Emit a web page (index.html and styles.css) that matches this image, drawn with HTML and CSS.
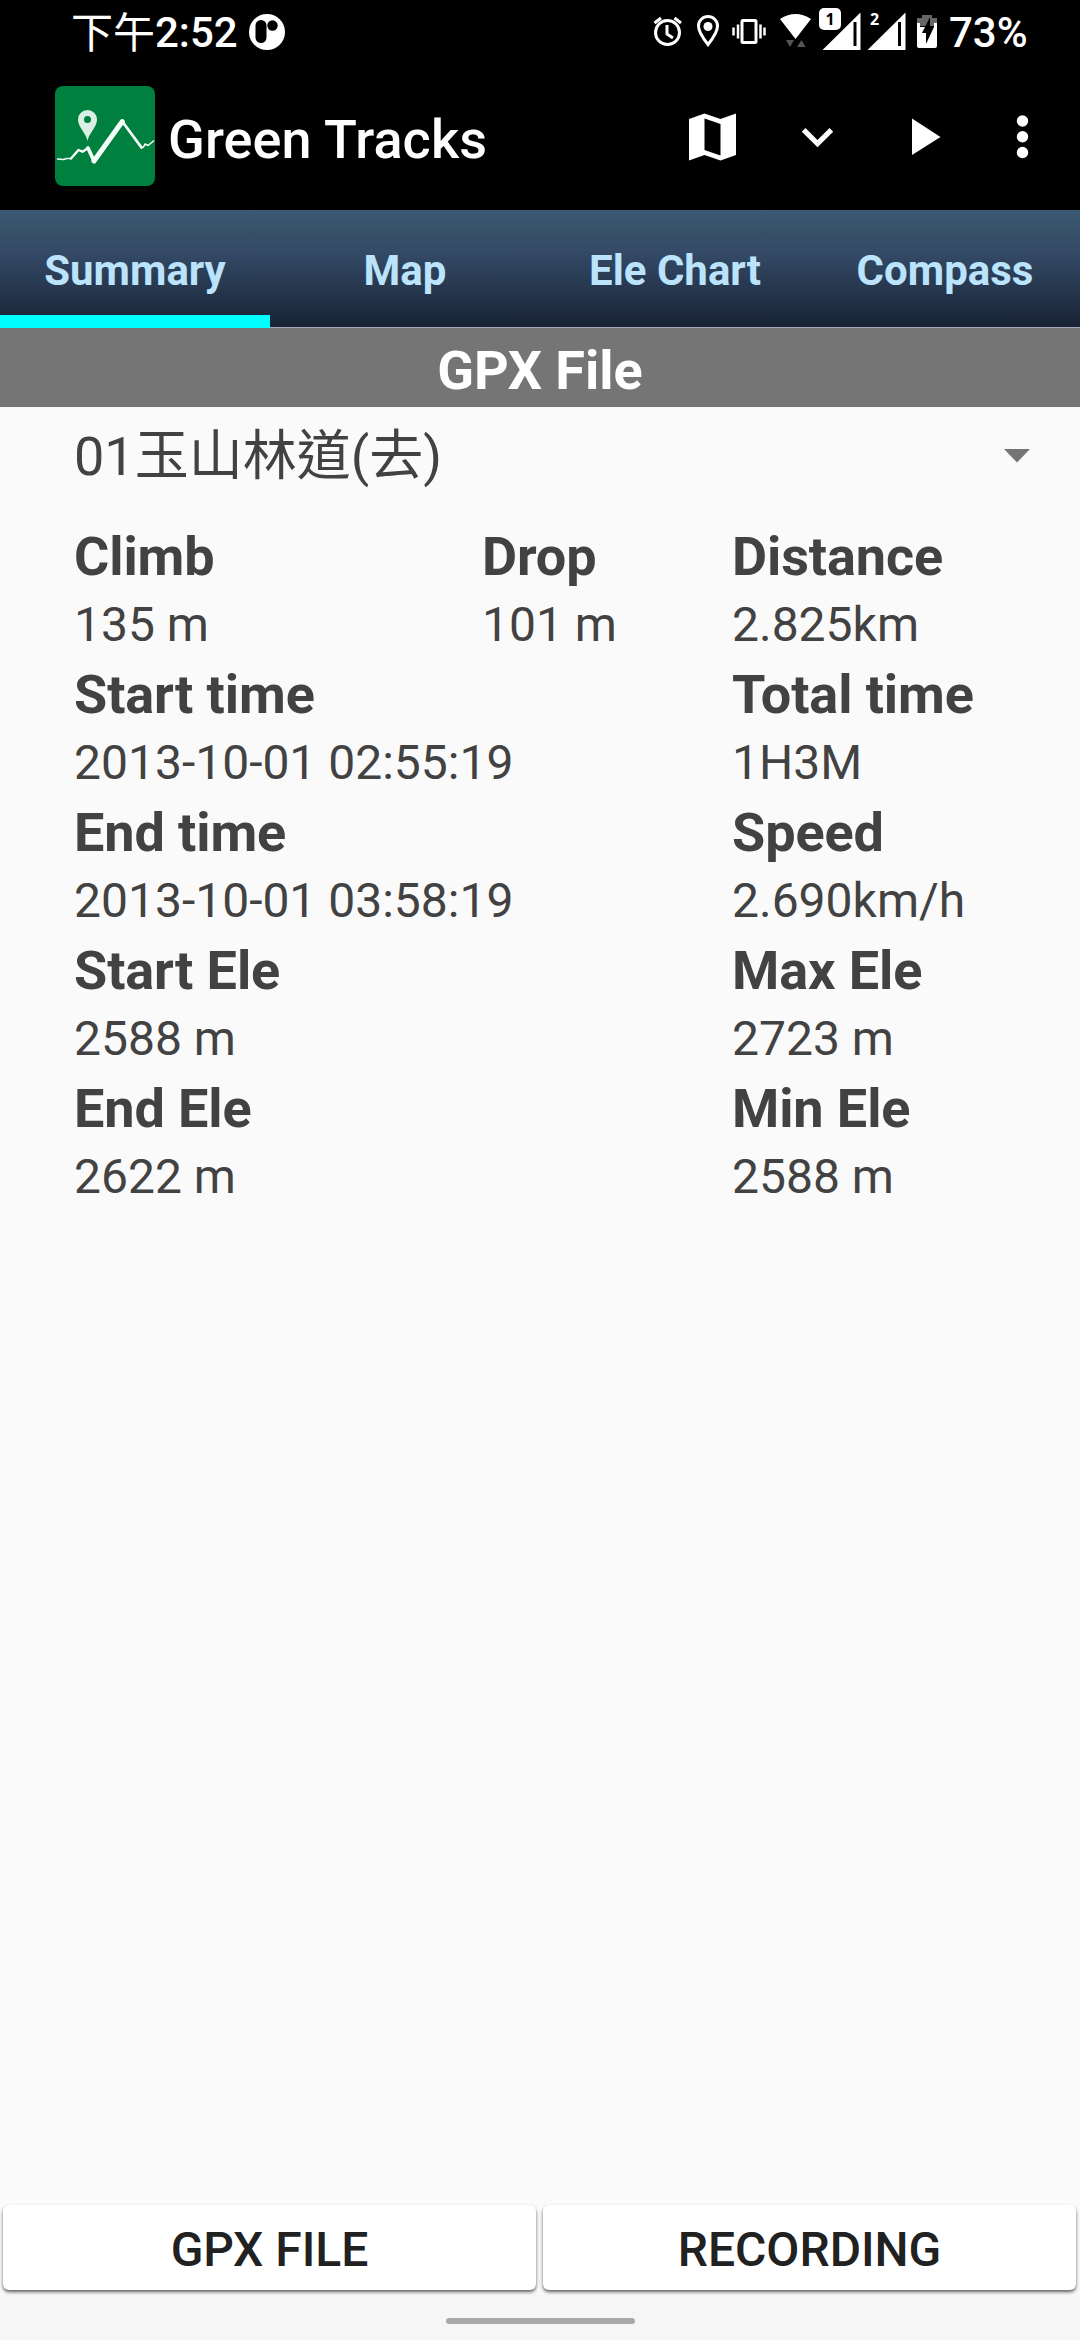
FILE: index.html
```html
<!DOCTYPE html>
<html lang="en">
<head>
<meta charset="utf-8">
<title>Green Tracks</title>
<link rel="stylesheet" href="styles.css">
</head>
<body>
<div class="screen">
  <header class="status">
    <div class="clock"><span class="cjk">下午</span><span>2:52</span></div>
    <svg class="notif" width="38" height="38" viewBox="0 0 38 38"><circle cx="19" cy="19" r="18" fill="#fff"/><rect x="7.500" y="7" width="11" height="23" rx="5.500" fill="#000"/><circle cx="24.500" cy="12.500" r="5.200" fill="#000"/></svg>
    <svg class="indicators" width="300" height="64" viewBox="0 0 300 64">
      <g fill="none" stroke="#fff" stroke-width="3">
        <circle cx="17.500" cy="32.500" r="12"/>
        <path d="M17 25v9l6 4M4.500 23l6.500-5M24.500 18l6.500 5"/>
        <path d="M58 44.500C52 37 48.500 31 48.500 26a9.500 9.500 0 0 1 19 0c0 5-3.500 11-9.500 18.500z"/>
        <rect x="92" y="20.500" width="14" height="22" rx="1"/>
        <path d="M88 24.500v14M83.500 27.500v8M110.500 24.500v14M114.500 27.500v8" stroke-width="2.500"/>
      </g>
      <circle cx="58" cy="26.500" r="4.500" fill="#fff"/>
      <path d="M130 19q15.500-10 31 0l-15.500 20z" fill="#fff"/>
      <path d="M136 40h8l-4 7zM147 47l4.500-7 4 7z" fill="#555"/>
      <path d="M172.500 50L210.500 12.500V50zM217.500 50L255.500 12.500V50z" fill="#fff"/>
      <path d="M205 22v24M249.500 22v24" stroke="#000" stroke-width="3"/>
      <rect x="169" y="8" width="22" height="22" rx="5" fill="#fff"/>
      <text class="sim" x="180" y="24.500" fill="#000">1</text>
      <text class="sim" x="224.500" y="24.500" fill="#fff">2</text>
      <path d="M267 26v-8h5v-3h10v3h5v8z" fill="#666"/>
      <path d="M267 23h3v4h14v-4h3v23q0 2-2 2h-16q-2 0-2-2z" fill="#fff"/>
      <path d="M280 17l-8 16h4v11l8-17h-4z" fill="#000"/>
    </svg>
    <span class="battery">73%</span>
  </header>

  <div class="toolbar">
    <svg class="logo" width="100" height="100" viewBox="0 0 100 100">
      <rect width="100" height="100" rx="8" fill="#00803f"/>
      <path fill-rule="evenodd" fill="#dcefe4" d="M32.500 55C31 47 23 41 23 33.500a9.500 9.500 0 0 1 19 0C42 41 34 47 32.500 55zM32.500 30a3.500 3.500 0 1 0 0 7a3.500 3.500 0 0 0 0-7z"/>
      <g class="track" fill="none" stroke="#f5fff9" stroke-linejoin="round" stroke-linecap="round">
        <path d="M2.500 73l6 .5 3-1 4.500 0" stroke-width="1.500"/>
        <path d="M16 72.500L23.500 64l4 1.700 5.500-3.700" stroke-width="2.400"/>
        <path d="M33 62l6 13" stroke-width="3.600"/>
        <path d="M39 75L67.300 35.500" stroke-width="5"/>
        <path d="M67.300 35.500L86.500 61.500" stroke-width="2.800"/>
        <path d="M86.500 61.500l2-.5 1.500-3 3 1.500 5.500-4.500" stroke-width="1.600"/>
      </g>
    </svg>
    <h1 class="title">Green Tracks</h1>
    <svg class="actions" width="400" height="72" viewBox="0 0 400 72" fill="#fff">
      <path fill-rule="evenodd" d="M9 15l15.500-5.500L40.500 15 56 9.500v41.500l-15.500 5.500L24.500 51 9 56.500zM24.500 14.500V46l16 5.500V20z"/>
      <path d="M125.500 24L137.500 36l12-12 3.700 3.700L137.500 43.300 121.800 27.700z"/>
      <path d="M232 14.500v36.500L260.500 33z"/>
      <circle cx="342.500" cy="17" r="5.700"/><circle cx="342.500" cy="32.700" r="5.700"/><circle cx="342.500" cy="48.500" r="5.700"/>
    </svg>
  </div>

  <nav class="tabs">
    <a class="tab tab-active">Summary</a><a class="tab">Map</a><a class="tab">Ele Chart</a><a class="tab">Compass</a>
  </nav>

  <h2 class="source">GPX File</h2>

  <div class="spinner">
    <span>01玉山林道(去)</span>
    <svg width="26" height="14" viewBox="0 0 26 14"><path d="M0 0h26L13 13.500z" fill="#757575"/></svg>
  </div>

  <main class="stats">
    <dl><dt>Climb</dt><dd>135 m</dd></dl><dl><dt>Drop</dt><dd>101 m</dd></dl><dl><dt>Distance</dt><dd>2.825km</dd></dl>
    <dl class="wide"><dt>Start time</dt><dd>2013-10-01 02:55:19</dd></dl><dl><dt>Total time</dt><dd>1H3M</dd></dl>
    <dl class="wide"><dt>End time</dt><dd>2013-10-01 03:58:19</dd></dl><dl><dt>Speed</dt><dd>2.690km/h</dd></dl>
    <dl class="wide"><dt>Start Ele</dt><dd>2588 m</dd></dl><dl><dt>Max Ele</dt><dd>2723 m</dd></dl>
    <dl class="wide"><dt>End Ele</dt><dd>2622 m</dd></dl><dl><dt>Min Ele</dt><dd>2588 m</dd></dl>
  </main>

  <div class="buttons"><button class="btn">GPX FILE</button><button class="btn">RECORDING</button></div>
  <footer class="navbar"><div class="handle"></div></footer>
</div>
</body>
</html>
```
FILE: styles.css
```css
* { box-sizing: border-box; margin: 0; padding: 0; }
body { background: #fafafa; font-family: Roboto, "Noto Sans CJK TC", sans-serif; }
.screen { width: 1080px; height: 2340px; display: flex; flex-direction: column; overflow: hidden; background: #fafafa; }

.status { height: 70px; flex: none; background: #000; color: #fff; display: flex; align-items: flex-start; padding-left: 71px; font-size: 42px; line-height: 66px; font-weight: 500; }
.clock { display: flex; width: 177px; white-space: nowrap; }
.cjk { font-family: "Noto Sans CJK TC", sans-serif; font-weight: 400; width: 84px; line-height: 60px; }
.notif { margin-top: 13px; }
.indicators { margin-left: 364px; width: 300px; flex: none; }
.sim { font-family: "Noto Sans", sans-serif; font-size: 16px; font-weight: 700; text-anchor: middle; }
.battery { margin-left: -1px; white-space: nowrap; }

.toolbar { height: 140px; flex: none; background: #000; color: #fff; display: flex; align-items: flex-start; padding-left: 55px; }
.logo { margin-top: 16px; flex: none; }
.track { filter: blur(.5px); }
.title { font-size: 54px; font-weight: 500; line-height: 64px; letter-spacing: .1px; margin: 38px 0 0 13px; width: 512px; white-space: nowrap; }
.actions { margin-top: 34px; flex: none; }

.tabs { height: 118px; flex: none; display: grid; grid-template-columns: repeat(4, 1fr); background: linear-gradient(#3a5975, #385269 17%, #344a67 35%, #1b2739 94%, #182235); border-bottom: 1px solid #aaa6bb; }
.tab { color: #bbe3fb; font-size: 42px; font-weight: 700; line-height: 122px; height: 118px; text-align: center; }
.tab-active { box-shadow: inset 0 -13px #0ff; }

.source { height: 79px; flex: none; background: #757575; color: #fff; font-size: 54px; font-weight: 700; line-height: 85px; text-align: center; }

.spinner { height: 99px; flex: none; display: flex; justify-content: space-between; align-items: center; padding: 0 50px 0 74px; color: #424242; font-size: 54px; line-height: 99px; }
.spinner svg { margin-bottom: 2px; }

.stats { flex: 1; display: grid; grid-template-columns: 408px 250px 1fr; grid-auto-rows: 138px; padding: 15px 0 0 74px; color: #424242; }
.wide { grid-column: span 2; }
.stats dt { font-size: 54px; font-weight: 700; line-height: 72px; height: 69px; letter-spacing: -.1px; }
.stats dd { font-size: 48px; line-height: 70px; height: 69px; }

.buttons { height: 90px; flex: none; display: grid; grid-template-columns: 1fr 1fr; gap: 7px; padding: 0 4px 5px 3px; }
.btn { border: 0; border-radius: 6px; background: #fff; color: #212121; font: 500 48px/86px Roboto, sans-serif; padding-top: 2px; height: 85px; box-shadow: 0 2px 3px rgba(0,0,0,.5), 0 3px 5px rgba(0,0,0,.15); }
.navbar { height: 45px; flex: none; padding-top: 23px; background: #f6f6f6; }
.handle { width: 189px; height: 6px; border-radius: 3px; background: #a9a9a9; margin: 0 auto; }
```
